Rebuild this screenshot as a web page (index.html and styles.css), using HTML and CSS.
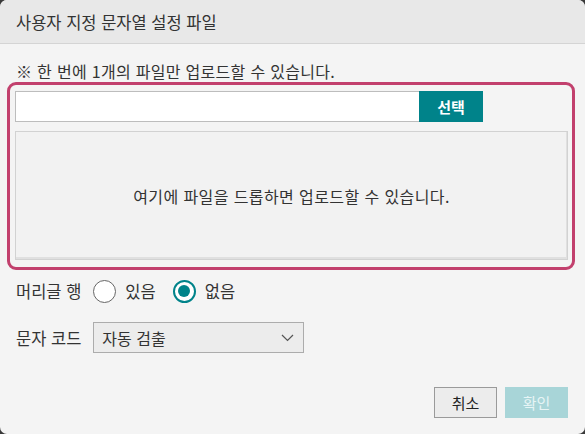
FILE: index.html
```html
<!DOCTYPE html>
<html lang="ko">
<head>
<meta charset="utf-8">
<link rel="stylesheet" href="styles.css">
</head>
<body>
<div class="dialog">
  <div class="header">사용자 지정 문자열 설정 파일</div>
  <div class="content">
    <div class="note">※ 한 번에 1개의 파일만 업로드할 수 있습니다.</div>
    <div class="upload">
      <div class="file-row">
        <div class="file-input"></div>
        <div class="file-btn">선택</div>
      </div>
      <div class="drop">여기에 파일을 드롭하면 업로드할 수 있습니다.</div>
    </div>
    <div class="row row-radio">
      <span class="label">머리글 행</span>
      <span class="radio"></span><span class="radio-text">있음</span>
      <span class="radio checked"></span><span class="radio-text">없음</span>
    </div>
    <div class="row row-select">
      <span class="label">문자 코드</span>
      <div class="select">
        <span>자동 검출</span>
        <svg class="chev" width="13" height="8" viewBox="0 0 13 8"><path d="M1 1 L6.5 6.5 L12 1" fill="none" stroke="#555" stroke-width="1.2"/></svg>
      </div>
    </div>
  </div>
  <div class="footer">
    <div class="btn cancel">취소</div>
    <div class="btn ok">확인</div>
  </div>
</div>
</body>
</html>
```

FILE: styles.css
```css
html, body {
  margin: 0;
  padding: 0;
  background: #3a3a3a;
}
body {
  font-family: "Noto Sans CJK KR", "Noto Sans", sans-serif;
  color: #333;
}
.dialog {
  width: 585px;
  height: 434px;
  background: #f4f4f4;
  border-radius: 7px;
  overflow: hidden;
  display: flex;
  flex-direction: column;
}
.header {
  height: 44px;
  box-sizing: border-box;
  background: #e8e8e8;
  border-bottom: 1px solid #d4d4d4;
  padding-left: 16px;
  display: flex;
  align-items: center;
  font-size: 16.5px;
  color: #333;
}
.content {
  flex: 1;
  display: flex;
  flex-direction: column;
}
.note {
  margin: 17px 0 0 16px;
  height: 21px;
  line-height: 21px;
  font-size: 16px;
  letter-spacing: 0.3px;
}
.upload {
  margin: 0 0 0 7px;
  width: 568px;
  height: 188px;
  box-sizing: border-box;
  border: 3px solid #c2406d;
  border-radius: 9px;
  padding: 6px 4px 7px 5px;
  display: flex;
  flex-direction: column;
}
.file-row {
  display: flex;
  height: 31px;
}
.file-input {
  width: 404px;
  box-sizing: border-box;
  background: #fff;
  border: 1px solid #bdbdbd;
  border-right: none;
}
.file-btn {
  width: 64px;
  background: #00838a;
  color: #fff;
  font-weight: bold;
  font-size: 15px;
  display: flex;
  align-items: center;
  justify-content: center;
}
.drop {
  margin-top: 9px;
  flex: 1;
  box-sizing: border-box;
  background: #f2f2f2;
  border: 1px solid #d2d2d2;
  box-shadow: inset -1px -2px 0 #e0e0e0;
  display: flex;
  align-items: center;
  justify-content: center;
  font-size: 16px;
  letter-spacing: 0.4px;
  color: #333;
}
.row {
  display: flex;
  align-items: center;
  padding-left: 16px;
  font-size: 16.5px;
}
.row-radio {
  margin-top: 9px;
  height: 24px;
}
.label {
  margin-right: 12px;
}
.radio {
  width: 23px;
  height: 23px;
  box-sizing: border-box;
  border: 1.5px solid #666;
  border-radius: 50%;
  background: #fff;
  margin-right: 9px;
  position: relative;
}
.radio.checked {
  border: 2px solid #00838a;
}
.radio.checked::after {
  content: "";
  position: absolute;
  left: 3.5px;
  top: 3.5px;
  width: 12px;
  height: 12px;
  border-radius: 50%;
  background: #00838a;
}
.radio-text {
  margin-right: 17px;
}
.row-select {
  margin-top: 19px;
  height: 31px;
}
.select {
  width: 211px;
  height: 31px;
  box-sizing: border-box;
  border: 1px solid #acacac;
  background: #ececec;
  display: flex;
  align-items: center;
  justify-content: space-between;
  padding: 0 8px 0 8px;
  font-size: 16px;
}
.chev {
  margin-right: 1px;
}
.footer {
  display: flex;
  justify-content: flex-end;
  gap: 8px;
  padding: 0 17px 16px 0;
}
.btn {
  width: 63px;
  height: 31px;
  box-sizing: border-box;
  display: flex;
  align-items: center;
  justify-content: center;
  font-size: 15px;
}
.cancel {
  background: #ececec;
  border: 1px solid #9a9a9a;
  color: #222;
}
.ok {
  background: #a8d5d8;
  color: #e6f4f5;
}
```
